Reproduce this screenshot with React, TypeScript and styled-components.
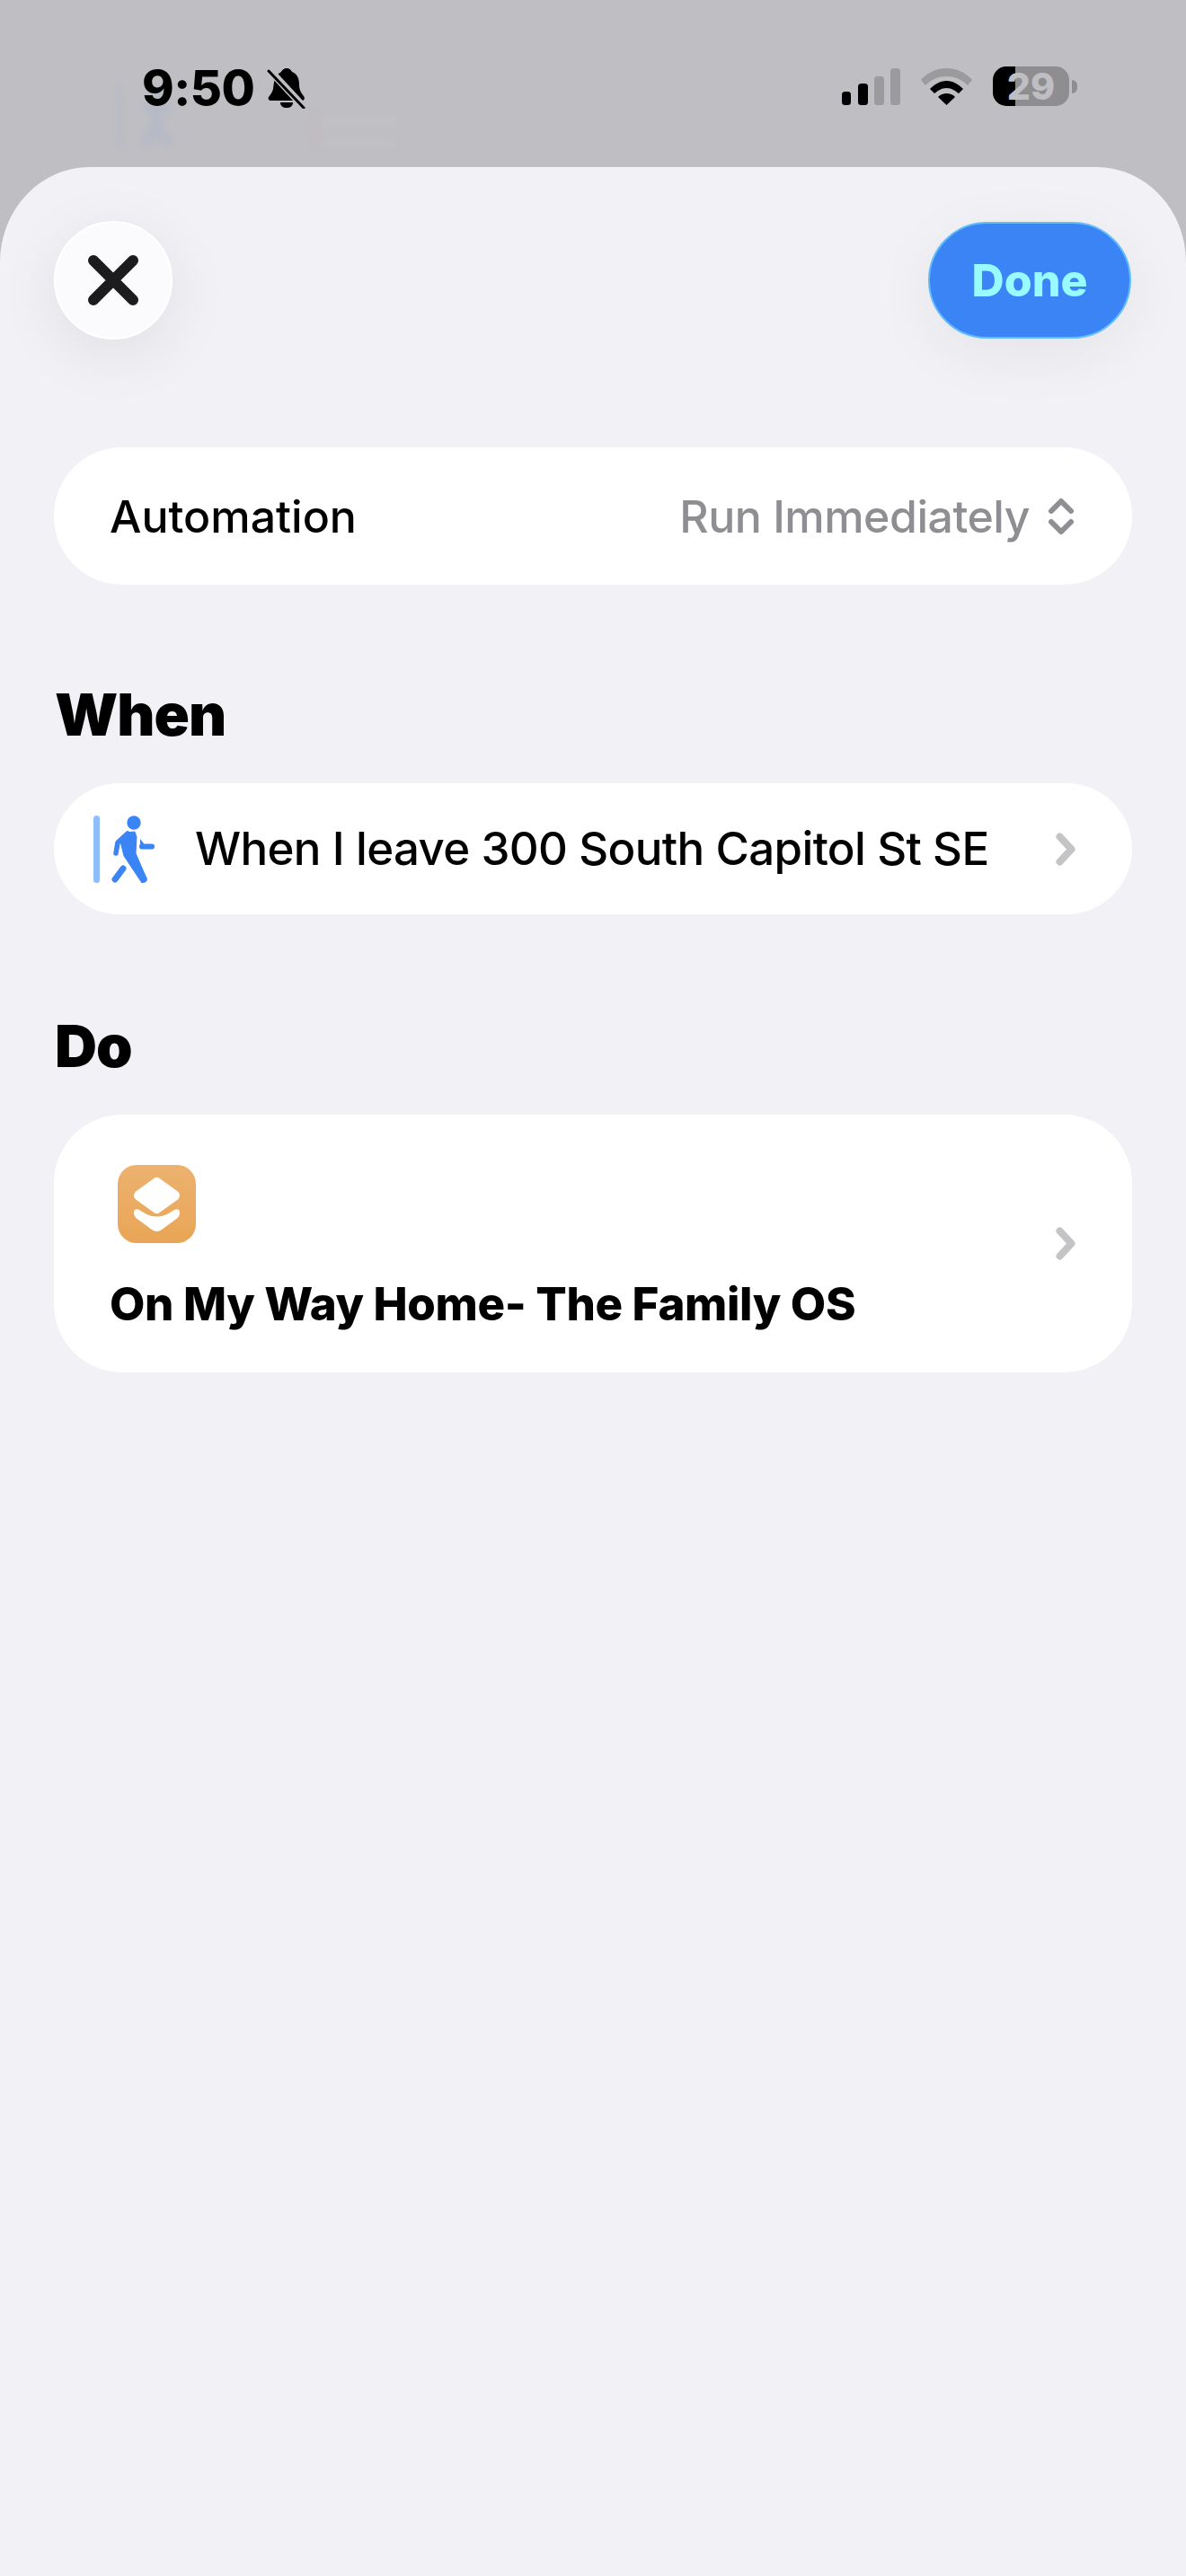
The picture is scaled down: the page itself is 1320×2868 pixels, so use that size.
import React from "react";
import styled, { createGlobalStyle } from "styled-components";

const Global = createGlobalStyle`
  html, body { margin: 0; padding: 0; background: #f1f1f6; }
  * { box-sizing: border-box; }
`;

const font = `Inter, "Noto Sans", "Liberation Sans", sans-serif`;

const Screen = styled.div`
  width: 1320px;
  height: 2868px;
  display: flex;
  flex-direction: column;
  background: #bfbec3;
  font-family: ${font};
  overflow: hidden;
  position: relative;
`;

const StatusBar = styled.header`
  height: 186px;
  flex: none;
  position: relative;
  display: flex;
  justify-content: space-between;
  align-items: flex-start;
  padding: 74px 130px 0 158px;
`;

const Ghost = styled.svg`
  position: absolute;
  left: 120px;
  top: 90px;
  width: 320px;
  height: 90px;
  filter: blur(5px);
  opacity: 0.12;
`;

const TimeGroup = styled.div`
  display: flex;
  align-items: center;
  gap: 14px;
  position: relative;
`;

const Time = styled.span`
  font-size: 54px;
  line-height: 48px;
  font-weight: 800;
  letter-spacing: -0.5px;
  color: #000;
`;

const Indicators = styled.div`
  display: flex;
  align-items: center;
  gap: 23px;
  position: relative;
`;

const Battery = styled.div`
  width: 85px;
  height: 44px;
  border-radius: 15px;
  background: linear-gradient(90deg, #000 25px, #8e8e90 25px);
  color: #bfbec3;
  font-size: 41px;
  line-height: 44px;
  font-weight: 800;
  text-align: center;
  position: relative;
  &::after {
    content: "";
    position: absolute;
    right: -9px;
    top: 15px;
    width: 6px;
    height: 15px;
    border-radius: 0 8px 8px 0;
    background: #8e8e90;
  }
`;

const Sheet = styled.main`
  flex: 1;
  background: #f1f1f6;
  border-radius: 100px 100px 0 0 / 106px 106px 0 0;
  padding: 60px 60px 0;
  display: flex;
  flex-direction: column;
`;

const TopBar = styled.div`
  display: flex;
  justify-content: space-between;
  align-items: center;
  height: 132px;
`;

const CloseButton = styled.button`
  width: 132px;
  height: 132px;
  padding: 0;
  border-radius: 50%;
  border: 2px solid #fff;
  background: #fbfbfe;
  box-shadow: 0 16px 70px rgba(0, 0, 0, 0.08);
  display: flex;
  align-items: center;
  justify-content: center;
`;

const DoneButton = styled.button`
  width: 226px;
  height: 130px;
  margin-right: 1px;
  padding: 0;
  border-radius: 65px;
  border: 2px solid #63bdfa;
  background: #3a84f6;
  box-shadow: 0 16px 70px rgba(0, 0, 0, 0.06);
  color: #98fbff;
  font-family: ${font};
  font-size: 50px;
  font-weight: 800;
`;

const Card = styled.section<{ $h: number; $r: number }>`
  height: ${(p) => p.$h}px;
  border-radius: ${(p) => p.$r}px;
  background: #fff;
  display: flex;
  align-items: center;
`;

const AutomationCard = styled(Card)`
  margin-top: 120px;
  padding: 0 64px 0 62px;
  justify-content: space-between;
`;

const RowLabel = styled.span`
  font-size: 50px;
  line-height: 60px;
  font-weight: 500;
  color: #000;
`;

const Picker = styled.span`
  display: flex;
  align-items: center;
  gap: 20px;
  color: #8e8e93;
  font-size: 50px;
  line-height: 60px;
  font-weight: 500;
  letter-spacing: -0.5px;
`;

const SectionTitle = styled.h2<{ $top: number }>`
  margin: ${(p) => p.$top}px 0 0 1px;
  font-size: 65px;
  line-height: 78px;
  font-weight: 900;
  letter-spacing: -1px;
  color: #000;
`;

const WhenCard = styled(Card)`
  margin-top: 37px;
  padding: 0 63px 0 44px;
`;

const WhenText = styled(RowLabel)`
  margin-left: 45px;
  flex: 1;
  font-size: 51px;
  letter-spacing: -0.65px;
`;

const DoCard = styled(Card)`
  margin-top: 37px;
  padding: 56px 63px 0 62px;
  align-items: flex-start;
`;

const DoBody = styled.div`
  flex: 1;
  display: flex;
  flex-direction: column;
  gap: 38px;
`;

const ShortcutIcon = styled.svg`
  display: block;
  margin-left: 9px;
`;

const DoTitle = styled.span`
  font-size: 51px;
  line-height: 60px;
  font-weight: 800;
  letter-spacing: -0.35px;
  color: #000;
`;

const DoChevron = styled.div`
  align-self: center;
  margin-top: -56px;
  display: flex;
`;

const Chevron = () => (
  <svg width="22" height="37" viewBox="0 0 22 37" fill="none">
    <path d="M4.500 4.500L17.500 18.500L4.500 32.500" stroke="#c4c4c7" strokeWidth="8" strokeLinecap="round" strokeLinejoin="round" />
  </svg>
);

export default function App() {
  return (
    <Screen>
      <Global />
      <StatusBar>
        <Ghost viewBox="0 0 320 90">
          <rect x="10" y="5" width="6" height="70" fill="#6f9fd8" />
          <circle cx="55" cy="15" r="8" fill="#5f94d8" />
          <path d="M55 22v28M40 30h30M55 50L40 72M55 50l14 22" stroke="#5f94d8" strokeWidth="9" />
          <rect x="225" y="35" width="12" height="36" fill="#c9b0a8" />
          <rect x="240" y="40" width="100" height="8" fill="#d8d8d8" />
          <rect x="240" y="65" width="100" height="8" fill="#d8d8d8" />
        </Ghost>
        <TimeGroup>
          <Time>9:50</Time>
          <svg width="44" height="46" viewBox="0 0 44 46">
            <path d="M22 1c3 0 5 2 6 4 6 2 8 8 8 14 0 6 2 9 5 13 2 3 0 5-2 5H5c-3 0-4-2-3-4 2-3 4-5 5-9 1-7 1-15 9-19 1-2 3-4 6-4z" fill="#000" />
            <path d="M15 39h14c0 4-3 6-7 6s-7-2-7-6z" fill="#000" />
            <path d="M3 3l38 41" stroke="#bfbec3" strokeWidth="8" />
            <path d="M2 4l39 41" stroke="#000" strokeWidth="3" strokeLinecap="round" />
          </svg>
        </TimeGroup>
        <Indicators>
          <svg width="65" height="41" viewBox="0 0 65 41">
            <rect x="0" y="26" width="10" height="15" rx="3.500" fill="#000" />
            <rect x="18" y="17" width="11" height="24" rx="3.500" fill="#000" />
            <rect x="36" y="9" width="11" height="32" rx="3.500" fill="#9b9b9d" />
            <rect x="54" y="0" width="11" height="41" rx="3.500" fill="#9b9b9d" />
          </svg>
          <svg width="57" height="41" viewBox="0 0 57 41">
            <path d="M0 13C8 4 18 0 28.500 0S49 4 57 13l-5 6C45 12 37 9 28.500 9S12 12 5 19z" fill="#9b9b9d" />
            <path d="M10 23c5-5 11-9 18.500-9S42 18 47 23l-5 5c-4-3-8-6-13.500-6S19 25 15 28z" fill="#000" />
            <path d="M19 32c3-3 6-4 9.500-4s7 1 9.500 4l-9.500 9z" fill="#000" />
          </svg>
          <Battery>29</Battery>
        </Indicators>
      </StatusBar>
      <Sheet>
        <TopBar>
          <CloseButton aria-label="Close">
            <svg width="56" height="56" viewBox="0 0 56 56" fill="none">
              <path d="M6 6l44 44M50 6L6 50" stroke="#1c1c1e" strokeWidth="12" strokeLinecap="round" />
            </svg>
          </CloseButton>
          <DoneButton>Done</DoneButton>
        </TopBar>
        <AutomationCard $h={153} $r={76}>
          <RowLabel>Automation</RowLabel>
          <Picker>
            Run Immediately
            <svg width="30" height="42" viewBox="0 0 30 42" fill="none">
              <path d="M4 15L15 4l11 11M4 27l11 11 11-11" stroke="#8e8e93" strokeWidth="6" strokeLinecap="round" strokeLinejoin="round" />
            </svg>
          </Picker>
        </AutomationCard>
        <SectionTitle $top={106}>When</SectionTitle>
        <WhenCard $h={146} $r={73}>
          <svg width="68" height="75" viewBox="0 0 68 75" fill="none">
            <rect x="0" y="0" width="7" height="75" rx="3.500" fill="#8fbcfb" />
            <circle cx="45" cy="8" r="7.700" fill="#3a84f6" />
            <path d="M36 19L46 18L48 24L47 42L59 70L54 75L34 45L30 29z" fill="#3a84f6" stroke="#3a84f6" strokeWidth="1" strokeLinejoin="round" />
            <path d="M25 42L27 30L38 20" stroke="#3a84f6" strokeWidth="5.500" strokeLinecap="round" strokeLinejoin="round" />
            <path d="M41 43L56 71" stroke="#3a84f6" strokeWidth="7.500" strokeLinecap="round" />
            <path d="M33 59L24 71" stroke="#3a84f6" strokeWidth="7" strokeLinecap="round" />
            <path d="M52 26L56 31V37H52z" fill="#3a84f6" />
            <path d="M54 34.500H65" stroke="#3a84f6" strokeWidth="6" strokeLinecap="round" />
          </svg>
          <WhenText>When I leave 300 South Capitol St SE</WhenText>
          <Chevron />
        </WhenCard>
        <SectionTitle $top={108}>Do</SectionTitle>
        <DoCard $h={287} $r={76}>
          <DoBody>
            <ShortcutIcon width="87" height="87" viewBox="0 0 87 87">
              <defs>
                <linearGradient id="sc" x1="0" y1="0" x2="0" y2="1">
                  <stop offset="0" stopColor="#ecb26f" />
                  <stop offset="1" stopColor="#e9a556" />
                </linearGradient>
              </defs>
              <rect width="87" height="87" rx="21" fill="url(#sc)" />
              <path d="M43.500 20L63 34L43.500 48L24 34z" fill="#fff" stroke="#fff" strokeWidth="12" strokeLinejoin="round" />
              <path d="M24 50C30 54 36 57.500 43.500 57.500C51 57.500 57 54 63 50C67 48 69 50 69 53C69 57 67 59 64 61L49 72C45.500 74.500 41.500 74.500 38 72L23 61C20 59 18 57 18 53C18 50 20 48 24 50Z" fill="#fff" />
            </ShortcutIcon>
            <DoTitle>On My Way Home- The Family OS</DoTitle>
          </DoBody>
          <DoChevron>
            <Chevron />
          </DoChevron>
        </DoCard>
      </Sheet>
    </Screen>
  );
}
